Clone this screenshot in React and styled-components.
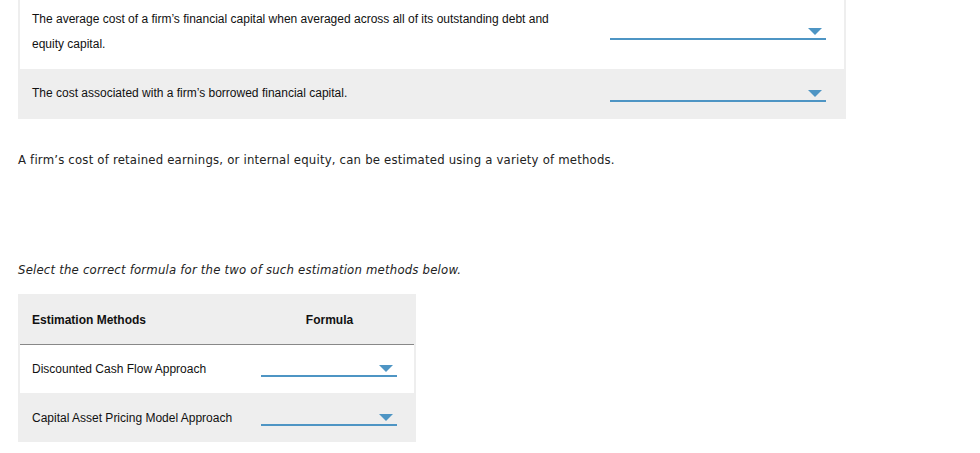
import styled, { createGlobalStyle } from 'styled-components';

const GlobalStyle = createGlobalStyle`
  body {
    margin: 0;
    background: #fff;
    color: #222;
    font-family: "Liberation Sans", Arial, sans-serif;
  }
`;

const Page = styled.div`
  padding: 0 18px;
  width: 828px;
`;

const MatchTable = styled.div`
  display: grid;
  grid-template-columns: 1fr 248px;
  background: #eee;
  padding: 0 2px;
  margin-top: -5px;
`;

const Row = styled.div`
  display: contents;
`;

const Cell = styled.div`
  display: flex;
  align-items: center;
  background: ${(p) => (p.$white ? '#fff' : 'transparent')};
  padding: ${(p) => p.$pad || '0'};
  font-size: 12px;
  line-height: 25px;
  color: #111;
`;

const Dropdown = styled.div`
  position: relative;
  width: 100%;
  height: 16px;
  border-bottom: 2px solid #4e95c4;
  box-sizing: border-box;
`;

const Arrow = styled.span`
  position: absolute;
  right: 4px;
  top: 4px;
  width: 0;
  height: 0;
  border-left: 7.5px solid transparent;
  border-right: 7.5px solid transparent;
  border-top: 7px solid #4e95c4;
`;

const Para = styled.p`
  margin: 0;
  font-family: "DejaVu Sans Condensed", "DejaVu Sans", sans-serif;
  font-size: 13px;
  letter-spacing: 0.2px;
  line-height: 20px;
  color: #222;
  font-style: ${(p) => (p.$italic ? 'italic' : 'normal')};
`;

const Intro = styled(Para)`
  padding-top: 31px;
`;

const Prompt = styled(Para)`
  padding-top: 90px;
`;

const MethodTable = styled.div`
  display: grid;
  grid-template-columns: 225px 169px;
  width: 394px;
  background: #eee;
  padding: 0 2px;
  margin-top: 14px;
`;

const Head = styled.div`
  display: flex;
  align-items: center;
  justify-content: ${(p) => (p.$center ? 'center' : 'flex-start')};
  height: 51px;
  padding-top: 1px;
  box-sizing: border-box;
  padding-left: ${(p) => (p.$center ? '0' : '12px')};
  border-bottom: 1px solid #888;
  font-size: 12px;
  font-weight: bold;
  color: #111;
`;

const MethodCell = styled.div`
  display: flex;
  align-items: center;
  height: ${(p) => p.$h}px;
  padding: ${(p) => (p.$drop ? '0 17px 0 16px' : '0 0 0 12px')};
  background: ${(p) => (p.$white ? '#fff' : 'transparent')};
  font-size: 12px;
  color: #111;
`;

const methods = [
  { name: 'Discounted Cash Flow Approach', white: true, h: 48 },
  { name: 'Capital Asset Pricing Model Approach', white: false, h: 49 },
];

function Select() {
  return (
    <Dropdown>
      <Arrow />
    </Dropdown>
  );
}

export default function App() {
  return (
    <>
      <GlobalStyle />
      <Page>
        <MatchTable>
          <Row>
            <Cell $white $pad="12px 36px 12px 12px">
              The average cost of a firm’s financial capital when averaged across all of its outstanding debt and equity capital.
            </Cell>
            <Cell $white $pad="0 18px 0 14px">
              <Select />
            </Cell>
          </Row>
          <Row>
            <Cell $pad="12px 36px 13px 14px" style={{ marginLeft: -2 }}>
              The cost associated with a firm’s borrowed financial capital.
            </Cell>
            <Cell $pad="0 20px 0 14px" style={{ marginRight: -2 }}>
              <Select />
            </Cell>
          </Row>
        </MatchTable>

        <Intro>A firm’s cost of retained earnings, or internal equity, can be estimated using a variety of methods.</Intro>
        <Prompt $italic>Select the correct formula for the two of such estimation methods below.</Prompt>

        <MethodTable>
          <Head>Estimation Methods</Head>
          <Head $center>Formula</Head>
          {methods.map((m) => (
            <Row key={m.name}>
              <MethodCell $white={m.white} $h={m.h}>{m.name}</MethodCell>
              <MethodCell $white={m.white} $h={m.h} $drop>
                <Select />
              </MethodCell>
            </Row>
          ))}
        </MethodTable>
      </Page>
    </>
  );
}
